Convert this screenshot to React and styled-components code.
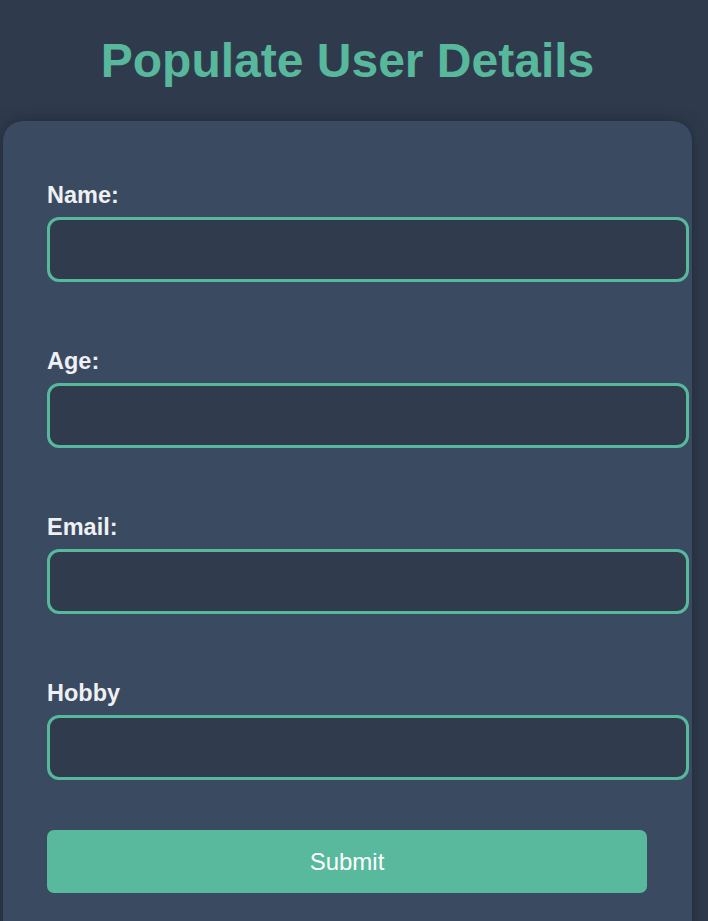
import React, { useState } from 'react';
import styled, { createGlobalStyle } from 'styled-components';

const GlobalStyle = createGlobalStyle`
  body {
    margin: 0;
    background-color: #2f3b4d;
    font-family: "Liberation Sans", Arial, sans-serif;
    overflow: hidden;
  }
`;

const Page = styled.div`
  width: 689px;
  margin-left: 3px;
`;

const Title = styled.h1`
  margin: 33px 0 33px;
  text-align: center;
  font-size: 48px;
  font-weight: bold;
  line-height: 55px;
  color: #57b89c;
`;

const Card = styled.form`
  box-sizing: border-box;
  width: 689px;
  padding: 61px 45px 60px 44px;
  background-color: #3a4a60;
  border-radius: 20px;
  box-shadow: 0 0 14px rgba(20, 26, 36, 0.55);
  display: flex;
  flex-direction: column;
`;

const Field = styled.div`
  display: flex;
  flex-direction: column;
  margin-bottom: ${(p) => (p.$last ? '50px' : '66px')};
`;

const Label = styled.label`
  font-size: 23.5px;
  font-weight: bold;
  line-height: 26px;
  color: #eef0f4;
  margin-bottom: 9px;
`;

const Input = styled.input`
  box-sizing: content-box;
  width: 100%;
  height: 59px;
  padding: 0 18px;
  border: 3px solid #57b89c;
  border-radius: 12px;
  background-color: #303c4e;
  color: #eef0f4;
  font-size: 20px;
  font-family: inherit;
  outline: none;
`;

const Button = styled.button`
  width: 600px;
  height: 63px;
  border: none;
  border-radius: 7px;
  background-color: #58b99c;
  color: #ffffff;
  font-size: 24px;
  font-family: inherit;
  cursor: pointer;
`;

const fields = [
  { key: 'name', label: 'Name:' },
  { key: 'age', label: 'Age:' },
  { key: 'email', label: 'Email:' },
  { key: 'hobby', label: 'Hobby' },
];

function App() {
  const [values, setValues] = useState({});

  const handleChange = (key) => (event) => {
    setValues({ ...values, [key]: event.target.value });
  };

  return (
    <>
      <GlobalStyle />
      <Page>
        <Title>Populate User Details</Title>
        <Card onSubmit={(e) => e.preventDefault()}>
          {fields.map((f, i) => (
            <Field key={f.key} $last={i === fields.length - 1}>
              <Label htmlFor={f.key}>{f.label}</Label>
              <Input id={f.key} value={values[f.key] || ''} onChange={handleChange(f.key)} />
            </Field>
          ))}
          <Button type="submit">Submit</Button>
        </Card>
      </Page>
    </>
  );
}

export default App;
